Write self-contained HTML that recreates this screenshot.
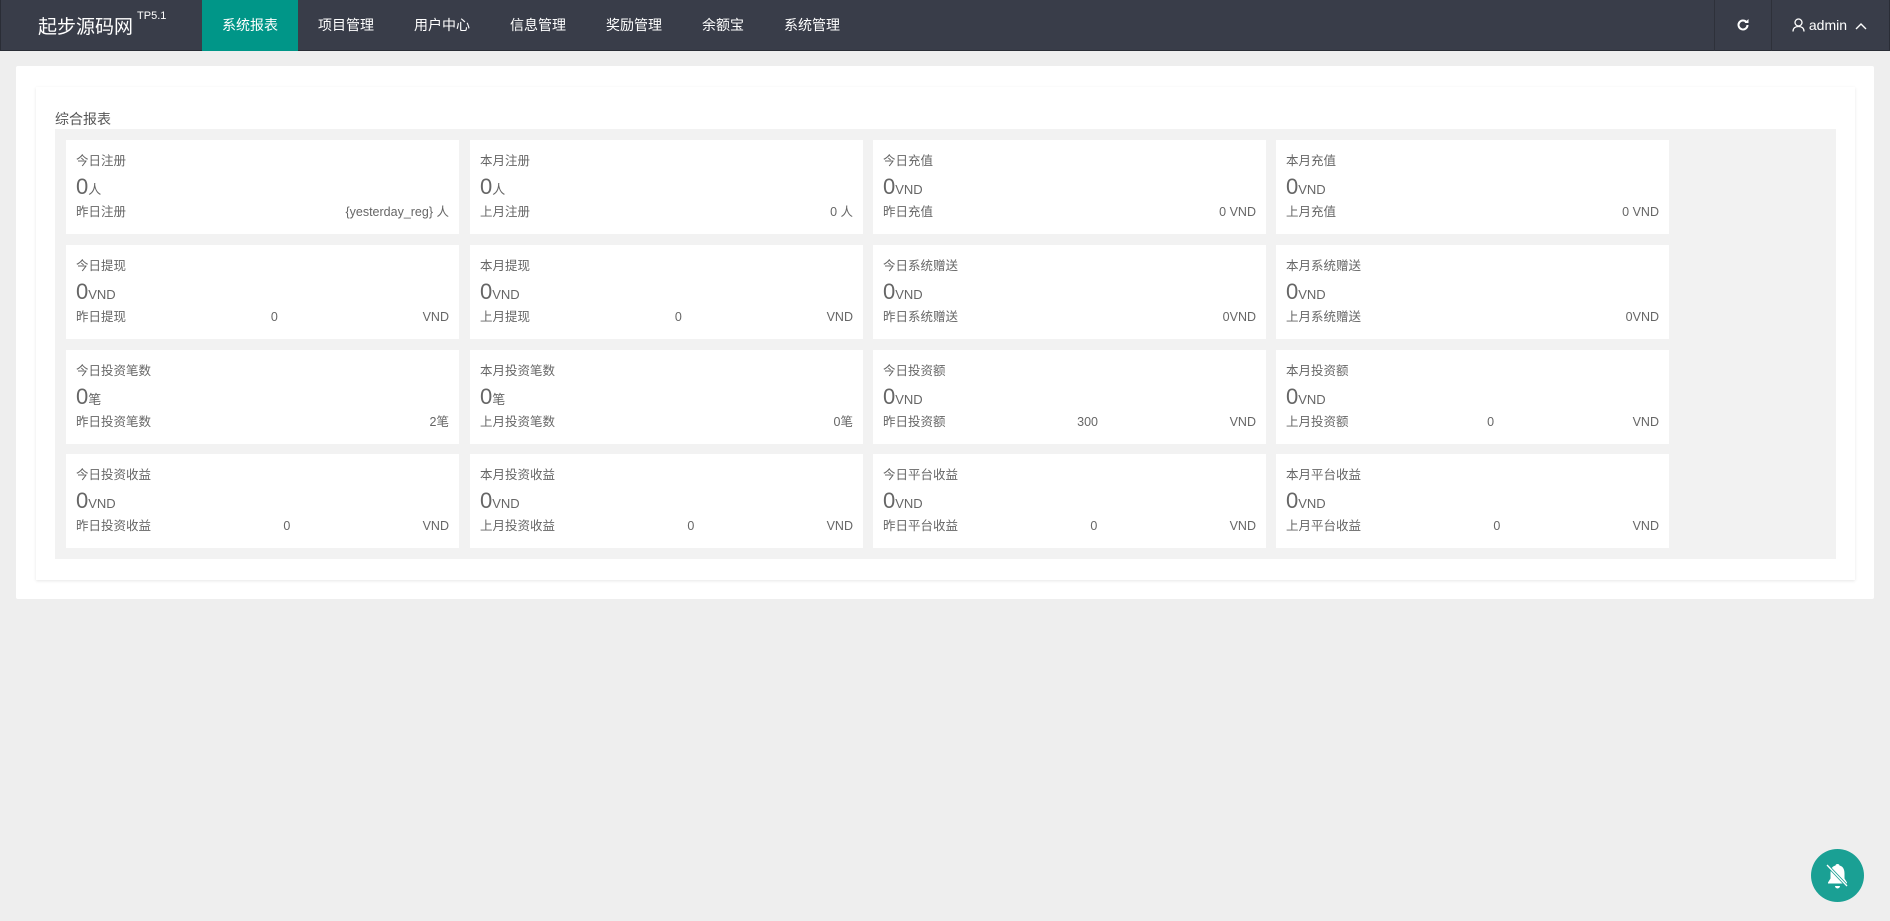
<!DOCTYPE html>
<html><head><meta charset="utf-8"><style>
*{margin:0;padding:0;box-sizing:border-box}
body{width:1890px;height:921px;background:#eeeeee;font-family:"Liberation Sans","Noto Sans CJK SC",sans-serif;color:#666;overflow:hidden;position:relative}
.nav{position:absolute;left:0;top:0;width:1890px;height:51px;background:#393d49;border:1px solid #2a2d36;border-top:none}
.logo{position:absolute;left:37px;top:12px;color:#fff;font-size:19px}
.logo sup{font-size:11px;vertical-align:top;position:relative;top:-2px;margin-left:4px}
.tabs{position:absolute;left:201px;top:0;height:51px;display:flex}
.tabs div{height:51px;line-height:51px;padding:0 20px;color:#fff;font-size:14px}
.tabs .on{background:#009688;width:96px;text-align:center;padding:0}
.rt{position:absolute;right:0;top:0;height:51px;display:flex}
.rt div{height:51px;line-height:51px;color:#fff;font-size:14px;border-left:1px solid #2e313a}
.box{position:absolute;left:16px;top:66px;width:1858px;height:533px;background:#fff;border-radius:2px}
.inner{position:absolute;left:20px;top:21px;width:1819px;height:493px;box-shadow:0 1px 3px rgba(0,0,0,.1)}
.title{position:absolute;left:19px;top:22px;font-size:14px;color:#555}
.gray{position:absolute;left:19px;top:42px;width:1781px;height:430px;background:#f2f2f2}
.card{position:absolute;width:393px;height:94px;background:#fff;padding:0 10px}
.l{position:absolute;top:12px;left:10px;font-size:12.5px;color:#666;line-height:18px}
.n{position:absolute;top:34px;left:10px;font-size:22px;color:#666}
.n span{font-size:13px}
.b{position:absolute;top:63px;left:10px;right:10px;display:flex;justify-content:space-between;align-items:center;font-size:12.5px;color:#666;line-height:18px}
.b span{display:block;line-height:18px;height:18px}
.bell{position:absolute;left:1811px;top:849px;width:53px;height:53px;border-radius:50%;background:#1aa094}
</style></head><body>
<div class="nav">
<div class="logo">起步源码网<sup>TP5.1</sup></div>
<div class="tabs"><div class="on">系统报表</div><div>项目管理</div><div>用户中心</div><div>信息管理</div><div>奖励管理</div><div>余额宝</div><div>系统管理</div></div>
<div class="rt">
<div style="width:57px;text-align:center"><svg width="14" height="14" viewBox="0 0 14 14" style="vertical-align:-2px"><path d="M11.5 7a4.5 4.5 0 1 1-1.3-3.2" fill="none" stroke="#fff" stroke-width="2"/><path d="M12.5 1v4h-4z" fill="#fff"/></svg></div>
<div style="width:118px;padding-left:20px"><svg width="13" height="14" viewBox="0 0 13 14" style="vertical-align:-2px"><circle cx="6.5" cy="4.5" r="3.5" fill="none" stroke="#fff" stroke-width="1.3"/><path d="M1 13.5c0-3.5 2.5-5 5.5-5s5.5 1.5 5.5 5" fill="none" stroke="#fff" stroke-width="1.3"/></svg> admin <svg width="12" height="8" viewBox="0 0 12 8" style="margin-left:4px"><path d="M1 7l5-5 5 5" fill="none" stroke="#fff" stroke-width="1.4"/></svg></div>
</div>
</div>
<div class="box"><div class="inner">
<div class="title">综合报表</div>
<div class="gray">
<div class="card" style="left:11px;top:11px"><div class="l">今日注册</div><div class="n">0<span>人</span></div><div class="b"><span>昨日注册</span><span>{yesterday_reg} 人</span></div></div>
<div class="card" style="left:415px;top:11px"><div class="l">本月注册</div><div class="n">0<span>人</span></div><div class="b"><span>上月注册</span><span>0 人</span></div></div>
<div class="card" style="left:818px;top:11px"><div class="l">今日充值</div><div class="n">0<span>VND</span></div><div class="b"><span>昨日充值</span><span>0 VND</span></div></div>
<div class="card" style="left:1221px;top:11px"><div class="l">本月充值</div><div class="n">0<span>VND</span></div><div class="b"><span>上月充值</span><span>0 VND</span></div></div>

<div class="card" style="left:11px;top:116px"><div class="l">今日提现</div><div class="n">0<span>VND</span></div><div class="b"><span>昨日提现</span><span>0</span><span>VND</span></div></div>
<div class="card" style="left:415px;top:116px"><div class="l">本月提现</div><div class="n">0<span>VND</span></div><div class="b"><span>上月提现</span><span>0</span><span>VND</span></div></div>
<div class="card" style="left:818px;top:116px"><div class="l">今日系统赠送</div><div class="n">0<span>VND</span></div><div class="b"><span>昨日系统赠送</span><span>0VND</span></div></div>
<div class="card" style="left:1221px;top:116px"><div class="l">本月系统赠送</div><div class="n">0<span>VND</span></div><div class="b"><span>上月系统赠送</span><span>0VND</span></div></div>

<div class="card" style="left:11px;top:221px"><div class="l">今日投资笔数</div><div class="n">0<span>笔</span></div><div class="b"><span>昨日投资笔数</span><span>2笔</span></div></div>
<div class="card" style="left:415px;top:221px"><div class="l">本月投资笔数</div><div class="n">0<span>笔</span></div><div class="b"><span>上月投资笔数</span><span>0笔</span></div></div>
<div class="card" style="left:818px;top:221px"><div class="l">今日投资额</div><div class="n">0<span>VND</span></div><div class="b"><span>昨日投资额</span><span>300</span><span>VND</span></div></div>
<div class="card" style="left:1221px;top:221px"><div class="l">本月投资额</div><div class="n">0<span>VND</span></div><div class="b"><span>上月投资额</span><span>0</span><span>VND</span></div></div>

<div class="card" style="left:11px;top:325px"><div class="l">今日投资收益</div><div class="n">0<span>VND</span></div><div class="b"><span>昨日投资收益</span><span>0</span><span>VND</span></div></div>
<div class="card" style="left:415px;top:325px"><div class="l">本月投资收益</div><div class="n">0<span>VND</span></div><div class="b"><span>上月投资收益</span><span>0</span><span>VND</span></div></div>
<div class="card" style="left:818px;top:325px"><div class="l">今日平台收益</div><div class="n">0<span>VND</span></div><div class="b"><span>昨日平台收益</span><span>0</span><span>VND</span></div></div>
<div class="card" style="left:1221px;top:325px"><div class="l">本月平台收益</div><div class="n">0<span>VND</span></div><div class="b"><span>上月平台收益</span><span>0</span><span>VND</span></div></div>
</div>
</div></div>
<div class="bell"><svg width="53" height="53" viewBox="0 0 53 53"><path d="M26.5 15c-1.5 0-2 1-2 1.5-4 1-5 4.5-5 8v5l-2.5 4v1h19v-1l-2.5-4v-5c0-3.5-1-7-5-8 0-.5-.5-1.5-2-1.5zM24 37a2.5 2.5 0 0 0 5 0z" fill="#fff"/><path d="M17 17l19 20" stroke="#1aa094" stroke-width="3"/><path d="M16 16l20 21" stroke="#fff" stroke-width="1.3"/></svg></div>
</body></html>
